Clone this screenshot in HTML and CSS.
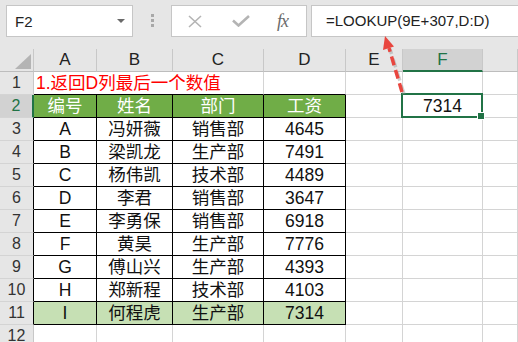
FILE: index.html
```html
<!DOCTYPE html>
<html lang="zh-CN">

<head>
    <meta charset="UTF-8">
    <meta name="viewport" content="width=device-width, initial-scale=1.0">
    <title>LOOKUP</title>
    <link rel="stylesheet" href="styles.css">
</head>

<body>
    <div class="app">
        <div class="toolbar">
            <div class="name-box">
                <span>F2</span>
                <i class="caret"></i>
            </div>
            <div class="grip"><i></i><i></i><i></i></div>
            <div class="fx-buttons">
                <svg class="btn-x" width="16" height="13" viewBox="0 0 16 13">
                    <path d="M2 1 L14 12 M14 1 L2 12" stroke="#b4b4b4" stroke-width="1.6" fill="none" />
                </svg>
                <svg class="btn-ok" width="18" height="12" viewBox="0 0 18 12">
                    <path d="M1 5.5 L6.5 10.5 L17 1" stroke="#b4b4b4" stroke-width="2.6" fill="none" />
                </svg>
                <span class="fx">fx</span>
            </div>
            <div class="formula">=LOOKUP(9E+307,D:D)</div>
        </div>

        <div class="sheet">
            <div class="corner"><i></i></div>
            <div class="ch">A</div>
            <div class="ch">B</div>
            <div class="ch">C</div>
            <div class="ch">D</div>
            <div class="ch">E</div>
            <div class="ch sel">F</div>
            <div class="ch"></div>

            <div class="rh">1</div>
            <div class="c title">1.返回D列最后一个数值</div>
            <div class="c top"></div>
            <div class="c"></div>
            <div class="c"></div>
            <div class="c"></div>

            <div class="rh sel box">2</div>
            <div class="c b head">编号</div>
            <div class="c b head">姓名</div>
            <div class="c b head">部门</div>
            <div class="c b head">工资</div>
            <div class="c"></div>
            <div class="c active">7314</div>
            <div class="c"></div>

            <div class="rh box">3</div>
            <div class="c b">A</div>
            <div class="c b">冯妍薇</div>
            <div class="c b">销售部</div>
            <div class="c b">4645</div>
            <div class="c"></div>
            <div class="c"></div>
            <div class="c"></div>

            <div class="rh box">4</div>
            <div class="c b">B</div>
            <div class="c b">梁凯龙</div>
            <div class="c b">生产部</div>
            <div class="c b">7491</div>
            <div class="c"></div>
            <div class="c"></div>
            <div class="c"></div>

            <div class="rh box">5</div>
            <div class="c b">C</div>
            <div class="c b">杨伟凯</div>
            <div class="c b">技术部</div>
            <div class="c b">4489</div>
            <div class="c"></div>
            <div class="c"></div>
            <div class="c"></div>

            <div class="rh box">6</div>
            <div class="c b">D</div>
            <div class="c b">李君</div>
            <div class="c b">销售部</div>
            <div class="c b">3647</div>
            <div class="c"></div>
            <div class="c"></div>
            <div class="c"></div>

            <div class="rh box">7</div>
            <div class="c b">E</div>
            <div class="c b">李勇保</div>
            <div class="c b">销售部</div>
            <div class="c b">6918</div>
            <div class="c"></div>
            <div class="c"></div>
            <div class="c"></div>

            <div class="rh box">8</div>
            <div class="c b">F</div>
            <div class="c b">黄昊</div>
            <div class="c b">生产部</div>
            <div class="c b">7776</div>
            <div class="c"></div>
            <div class="c"></div>
            <div class="c"></div>

            <div class="rh box">9</div>
            <div class="c b">G</div>
            <div class="c b">傅山兴</div>
            <div class="c b">生产部</div>
            <div class="c b">4393</div>
            <div class="c"></div>
            <div class="c"></div>
            <div class="c"></div>

            <div class="rh box">10</div>
            <div class="c b">H</div>
            <div class="c b">郑新程</div>
            <div class="c b">技术部</div>
            <div class="c b">4103</div>
            <div class="c"></div>
            <div class="c"></div>
            <div class="c"></div>

            <div class="rh box">11</div>
            <div class="c b last">I</div>
            <div class="c b last">何程虎</div>
            <div class="c b last">生产部</div>
            <div class="c b last">7314</div>
            <div class="c"></div>
            <div class="c"></div>
            <div class="c"></div>

            <div class="rh">12</div>
            <div class="c"></div>
            <div class="c"></div>
            <div class="c"></div>
            <div class="c"></div>
            <div class="c"></div>
            <div class="c"></div>
            <div class="c"></div>
        </div>

        <!-- annotation arrow pointing at the formula -->
        <svg class="arrow" width="518" height="342" viewBox="0 0 518 342">
            <line x1="403" y1="93" x2="389" y2="48" stroke="#9a9a9a" stroke-opacity=".45" stroke-width="3.5"
                stroke-dasharray="9 5" transform="translate(1 1)" />
            <line x1="402" y1="92" x2="389" y2="48" stroke="#e8463f" stroke-width="3.5" stroke-dasharray="9 5" />
            <polygon points="385,36 394,46.5 383,50" fill="#e8463f" />
        </svg>
    </div>
</body>

</html>
```

FILE: styles.css
```css
* {
    box-sizing: border-box;
}

body {
    margin: 0;
    background: #fff;
    font-family: "Liberation Sans", "Noto Sans CJK SC", sans-serif;
}

.app {
    position: relative;
    width: 518px;
    height: 342px;
    overflow: hidden;
}

/* formula bar */
.toolbar {
    display: flex;
    align-items: flex-start;
    height: 49px;
    padding: 5px 0 0 6px;
    background: #e6e6e6;
}

.name-box {
    display: flex;
    align-items: center;
    justify-content: space-between;
    width: 127px;
    height: 32px;
    padding: 0 7px 0 8px;
    background: #fff;
    border: 1px solid #c6c6c6;
    font-size: 15px;
    color: #222;
}

.name-box .caret {
    width: 0;
    height: 0;
    border-left: 4px solid transparent;
    border-right: 4px solid transparent;
    border-top: 4px solid #6a6a6a;
}

.grip {
    display: flex;
    flex-direction: column;
    gap: 2px;
    margin: 9px 0 0 18px;
}

.grip i {
    display: block;
    width: 3px;
    height: 3px;
    background: #a8a8a8;
}

.fx-buttons {
    display: flex;
    align-items: center;
    width: 136px;
    height: 32px;
    margin-left: 17px;
    padding-left: 15px;
    background: #fff;
    border: 1px solid #c6c6c6;
}

.btn-ok {
    margin-left: 29px;
}

.fx {
    margin-left: 27px;
    font-family: "Liberation Serif", serif;
    font-style: italic;
    font-size: 18px;
    color: #6a6a6a;
    letter-spacing: -1px;
}

.formula {
    flex: 1;
    height: 32px;
    margin: 0 -10px 0 4px;
    padding-left: 14px;
    background: #fff;
    border: 1px solid #c6c6c6;
    font-size: 15px;
    line-height: 30px;
    color: #222;
}

/* worksheet */
.sheet {
    display: grid;
    grid-template-columns: 34px 63px 76px 91px 82px 57px 80px 1fr;
    grid-auto-rows: 23px;
    font-size: 17.5px;
}

.sheet > div {
    display: flex;
    align-items: center;
    justify-content: center;
    border-right: 1px solid #d4d4d4;
    border-bottom: 1px solid #d4d4d4;
    white-space: nowrap;
    line-height: 22px;
}

.sheet .corner {
    position: relative;
    background: #e6e6e6;
    border-right-color: #c8c8c8;
    border-bottom-color: #bdbdbd;
}

.corner i {
    position: absolute;
    right: 2px;
    bottom: 2px;
    width: 0;
    height: 0;
    border-left: 16px solid transparent;
    border-bottom: 15px solid #b4b4b4;
}

.sheet .ch {
    background: #e6e6e6;
    color: #222;
    font-size: 17px;
    border-right-color: #c8c8c8;
    border-bottom-color: #bdbdbd;
}

.sheet .ch.sel {
    background: #d2d2d2;
    color: #217346;
    border-bottom: 2px solid #217346;
}

.sheet .rh {
    background: #e6e6e6;
    color: #333;
    font-size: 16px;
    border-right-color: #c8c8c8;
    border-bottom-color: #d4d4d4;
}

.sheet .rh.box {
    border-right-color: #000;
}

.sheet .rh.sel {
    background: #d2d2d2;
    color: #217346;
    border-right: 2px solid #217346;
}

.sheet .title {
    grid-column: span 3;
    justify-content: flex-start;
    padding-left: 2px;
    color: #ff0000;
    border-bottom-color: #000;
}

.sheet .top {
    border-bottom-color: #000;
}

.sheet .b {
    border-right-color: #000;
    border-bottom-color: #000;
    color: #111;
}

.sheet .head {
    background: #70ad47;
    color: #fff;
}

.sheet .last {
    background: #c6e0b4;
}

.sheet .active {
    position: relative;
    color: #111;
}

.sheet .active::before {
    content: '';
    position: absolute;
    top: -2px;
    left: -2px;
    right: -1px;
    bottom: -1px;
    border: 2px solid #217346;
}

.sheet .active::after {
    content: '';
    position: absolute;
    right: -3px;
    bottom: -3px;
    width: 6px;
    height: 6px;
    background: #217346;
    border: 1px solid #fff;
}

.arrow {
    position: absolute;
    top: 0;
    left: 0;
    pointer-events: none;
}
```
